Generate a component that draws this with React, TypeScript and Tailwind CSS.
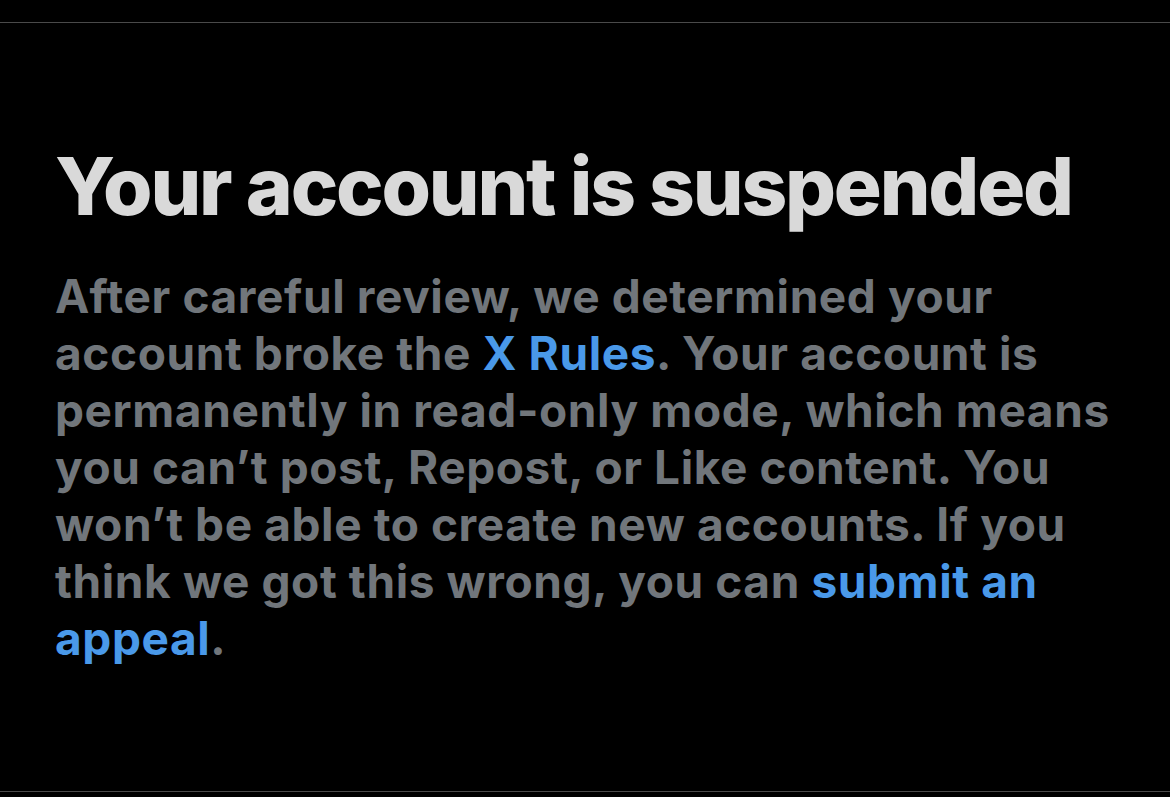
import React from "react";

export default function App() {
  return (
    <div className="w-[1170px] h-[797px] bg-black overflow-hidden" style={{ fontFamily: "Inter, 'Liberation Sans', sans-serif" }}>
      <div className="mt-[22px] h-[770px] border-t border-b border-[#4a4a4a] pl-[55px] pr-[25px] pt-[123px]">
        <h1 className="text-[80px] leading-[80px] font-extrabold text-[#d9d9d9] tracking-[-2.2px]">
          Your account is suspended
        </h1>
        <p className="mt-[42px] text-[46px] leading-[57px] font-bold text-[#71767b] tracking-[0.6px]">
          After careful review, we determined your account broke the{" "}
          <a className="text-[#4a99e9]">X Rules</a>. Your account is permanently in read-only mode, which means you
          can’t post, Repost, or Like content. You won’t be able to create new accounts. If you think we got this
          wrong, you can <a className="text-[#4a99e9]">submit an appeal</a>.
        </p>
      </div>
    </div>
  );
}
